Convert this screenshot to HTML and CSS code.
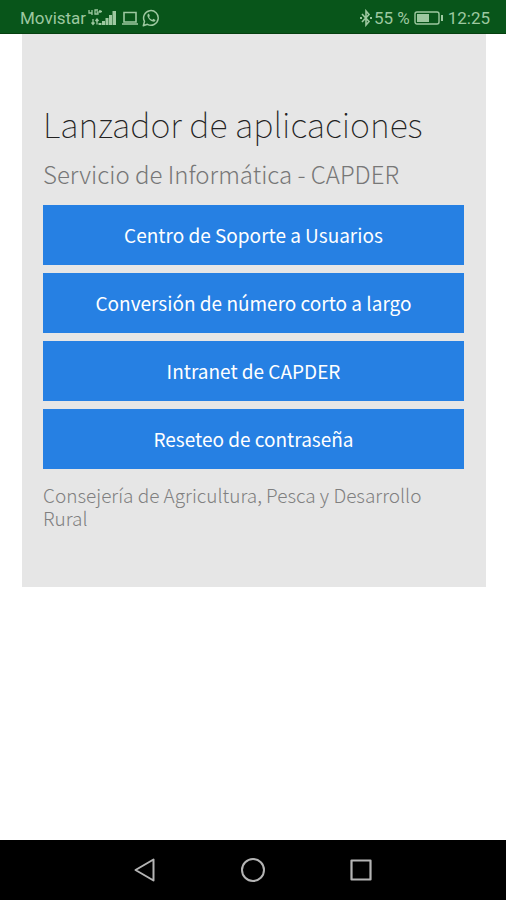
FILE: index.html
```html
<!doctype html>
<html lang="es">

<head>
	<meta charset="UTF-8" />
	<meta name="viewport" content="width=device-width, initial-scale=1.0" />
	<title>Lanzador de aplicaciones</title>
	<link rel="stylesheet" href="styles.css">
</head>

<body>
	<header class="status-bar">
		<div class="status-group">
			<span>Movistar</span>
			<svg class="signal" width="29" height="18" viewBox="0 0 29 18" aria-hidden="true">
				<path d="M1 1v3h3M4 1v5M10 1H7v4h3V3H8.500M12 1v3M11 2.500h3" fill="none" stroke="currentColor" stroke-width="1.300" />
				<path d="M5 10v5M3.500 13.500L5 15.500l1.500-2M9 15.500v-5M7.500 12L9 10l1.500 2" fill="none" stroke="currentColor" stroke-width="1.300" />
				<path d="M10.500 14h3v2h-3zM14 12h3v4h-3zM17.500 9h3v7h-3zM21 6h3v10h-3zM24.500 2H28v14h-3.500z" fill="currentColor" />
			</svg>
			<svg width="18" height="18" viewBox="0 0 18 18" aria-hidden="true">
				<path d="M3 3.500h12V13H3zM1 15h16" fill="none" stroke="currentColor" stroke-width="1.600" />
			</svg>
			<svg class="whatsapp" width="18" height="18" viewBox="0 0 18 18" aria-hidden="true">
				<path d="M1.300 16.700l1.200-4.300a7.300 7.300 0 1 1 2.900 2.900z" fill="none" stroke="currentColor" stroke-width="1.500" stroke-linejoin="round" />
				<path d="M6.200 4.800c-1 .8-1 2-.3 3.400 1 2.100 2.700 3.700 4.900 4.400 1.300.4 2.500-.3 2.700-1.700l-2.200-1.200-1.100 1.200C8.700 10.300 7.700 9.300 7.100 8l.8-.9-.9-2.300z" fill="currentColor" />
			</svg>
		</div>
		<div class="status-group">
			<svg class="bluetooth" width="12" height="18" viewBox="0 0 12 18" aria-hidden="true">
				<path d="M2 5l7 7.500L6 16V2l3 3.500L2 13" fill="none" stroke="currentColor" stroke-width="1.600" />
				<path d="M0 8h2v2H0zM10 8h2v2h-2z" fill="currentColor" />
			</svg>
			<span>55 %</span>
			<svg class="battery" width="30" height="16" viewBox="0 0 30 16" aria-hidden="true">
				<rect x="1" y="2" width="24" height="12" rx="2" fill="none" stroke="currentColor" stroke-width="1.400" />
				<path d="M3 4h12v8H3z" fill="currentColor" />
				<path d="M28 5v6" stroke="currentColor" stroke-width="2" />
			</svg>
			<span>12:25</span>
		</div>
	</header>

	<main class="content">
		<section class="launcher">
			<h1>Lanzador de aplicaciones</h1>
			<h2>Servicio de Informática - CAPDER</h2>
			<div class="button-list">
				<button type="button">Centro de Soporte a Usuarios</button>
				<button type="button">Conversión de número corto a largo</button>
				<button type="button">Intranet de CAPDER</button>
				<button type="button">Reseteo de contraseña</button>
			</div>
			<p>Consejería de Agricultura, Pesca y Desarrollo Rural</p>
		</section>
	</main>

	<nav class="nav-bar">
		<button type="button" aria-label="Atrás">
			<svg width="26" height="26" viewBox="0 0 26 26">
				<path d="M3.500 13L21.500 2.500v21z" fill="none" stroke="currentColor" stroke-width="2" stroke-linejoin="round" />
			</svg>
		</button>
		<button type="button" aria-label="Inicio">
			<svg width="26" height="26" viewBox="0 0 26 26">
				<circle cx="13" cy="13" r="11" fill="none" stroke="currentColor" stroke-width="2" />
			</svg>
		</button>
		<button type="button" aria-label="Recientes">
			<svg width="26" height="26" viewBox="0 0 26 26">
				<path d="M3.500 3.500h19v19h-19z" fill="none" stroke="currentColor" stroke-width="2.200" stroke-linejoin="round" />
			</svg>
		</button>
	</nav>
</body>

</html>
```

FILE: styles.css
```css
* {
	margin: 0;
	padding: 0;
	box-sizing: border-box;
}

body {
	font-family: "Noto Sans CJK SC", "Noto Sans", sans-serif;
	background-color: #fff;
	min-height: 100vh;
	display: flex;
	flex-direction: column;
}

svg {
	display: block;
}

.status-bar {
	display: flex;
	justify-content: space-between;
	align-items: center;
	height: 34px;
	padding: 2px 16px 0 20px;
	background-color: #08551a;
	color: #9dc8a0;
	border-bottom: 1px solid #05400f;
	font-family: Roboto, sans-serif;
	font-size: 17px;
}

.status-group {
	display: flex;
	align-items: center;
	gap: 4px;
}

.signal {
	margin-left: -2px;
}

.whatsapp {
	margin-left: -1px;
}

.bluetooth {
	margin-right: -2px;
}

.content {
	flex: 1;
	padding: 0 20px 0 22px;
}

.launcher {
	background-color: #e6e6e6;
	padding: 66px 22px 58px 21px;
}

h1 {
	color: #222;
	font-size: 34px;
	font-weight: 100;
	line-height: 48px;
}

h2 {
	color: #777;
	font-size: 24px;
	font-weight: 300;
	line-height: 32px;
	margin: 10px 0 15px;
}

.button-list {
	display: flex;
	flex-direction: column;
	gap: 8px;
}

.button-list button {
	height: 60px;
	padding-bottom: 2px;
	border: none;
	background-color: #2680e3;
	color: #fff;
	font-family: inherit;
	font-size: 19px;
	font-weight: 400;
	cursor: pointer;
}

.button-list button:hover {
	background-color: #1c70cc;
}

.launcher p {
	color: #808080;
	font-size: 19px;
	font-weight: 300;
	line-height: 23px;
	margin-top: 14px;
}

.nav-bar {
	display: flex;
	justify-content: center;
	align-items: center;
	height: 60px;
	gap: 82px;
	background-color: #000;
}

.nav-bar button {
	border: none;
	background: none;
	color: #b4b4b4;
	cursor: pointer;
}
```
